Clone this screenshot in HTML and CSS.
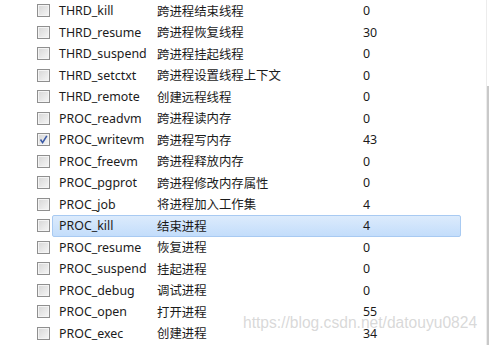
FILE: index.html
```html
<!DOCTYPE html>
<html lang="zh-CN">
<head>
    <meta charset="UTF-8">
    <meta name="viewport" content="width=device-width, initial-scale=1.0">
    <title>API 监控</title>
    <link rel="stylesheet" href="styles.css">
</head>
<body>
    <div class="panel">
        <!-- 监控项列表 -->
        <ul class="apiList">
            <li class="row"><span class="check"></span><div class="item"><span class="name">THRD_kill</span><span class="desc">跨进程结束线程</span><span class="count">0</span></div></li>
            <li class="row"><span class="check"></span><div class="item"><span class="name">THRD_resume</span><span class="desc">跨进程恢复线程</span><span class="count">30</span></div></li>
            <li class="row"><span class="check"></span><div class="item"><span class="name">THRD_suspend</span><span class="desc">跨进程挂起线程</span><span class="count">0</span></div></li>
            <li class="row"><span class="check"></span><div class="item"><span class="name">THRD_setctxt</span><span class="desc">跨进程设置线程上下文</span><span class="count">0</span></div></li>
            <li class="row"><span class="check"></span><div class="item"><span class="name">THRD_remote</span><span class="desc">创建远程线程</span><span class="count">0</span></div></li>
            <li class="row"><span class="check"></span><div class="item"><span class="name">PROC_readvm</span><span class="desc">跨进程读内存</span><span class="count">0</span></div></li>
            <li class="row"><span class="check checked"><svg width="11" height="11" viewBox="0 0 11 11"><path d="M2.5 5.5 L4.6 8.6 L8.8 1.8" fill="none" stroke="#3b5aa6" stroke-width="1.6"/></svg></span><div class="item"><span class="name">PROC_writevm</span><span class="desc">跨进程写内存</span><span class="count">43</span></div></li>
            <li class="row"><span class="check"></span><div class="item"><span class="name">PROC_freevm</span><span class="desc">跨进程释放内存</span><span class="count">0</span></div></li>
            <li class="row"><span class="check"></span><div class="item"><span class="name">PROC_pgprot</span><span class="desc">跨进程修改内存属性</span><span class="count">0</span></div></li>
            <li class="row"><span class="check"></span><div class="item"><span class="name">PROC_job</span><span class="desc">将进程加入工作集</span><span class="count">4</span></div></li>
            <li class="row"><span class="check"></span><div class="item selected"><span class="name">PROC_kill</span><span class="desc">结束进程</span><span class="count">4</span></div></li>
            <li class="row"><span class="check"></span><div class="item"><span class="name">PROC_resume</span><span class="desc">恢复进程</span><span class="count">0</span></div></li>
            <li class="row"><span class="check"></span><div class="item"><span class="name">PROC_suspend</span><span class="desc">挂起进程</span><span class="count">0</span></div></li>
            <li class="row"><span class="check"></span><div class="item"><span class="name">PROC_debug</span><span class="desc">调试进程</span><span class="count">0</span></div></li>
            <li class="row"><span class="check"></span><div class="item"><span class="name">PROC_open</span><span class="desc">打开进程</span><span class="count">55</span></div></li>
            <li class="row"><span class="check"></span><div class="item"><span class="name">PROC_exec</span><span class="desc">创建进程</span><span class="count">34</span></div></li>
        </ul>

        <!-- 滚动条 -->
        <div class="scrollTrack">
            <div class="scrollThumb"></div>
        </div>
    </div>

    <div class="watermark">https://blog.csdn.net/datouyu0824</div>
</body>
</html>
```

FILE: styles.css
```css
body {
    margin: 0;
    width: 490px;
    height: 345px;
    overflow: hidden;
    background: #ffffff;
    font-family: "Noto Sans", "Noto Sans CJK SC", sans-serif;
    font-size: 12.4px;
    color: #1b1b1b;
    position: relative;
}

.panel {
    display: flex;
    height: 345px;
}

.apiList {
    list-style: none;
    margin: 0;
    padding: 0;
    width: 487px;
}

.row {
    display: flex;
    align-items: center;
    height: 21.5px;
}

.check {
    box-sizing: border-box;
    width: 13px;
    height: 13px;
    margin-left: 37px;
    margin-right: 2px;
    border: 1px solid #8f8f8f;
    background: linear-gradient(135deg, #d6d6d6 0%, #f6f6f6 100%);
    box-shadow: inset 0 0 0 1px #f4f4f4;
    display: flex;
    align-items: center;
    justify-content: center;
}

.check svg {
    display: block;
}

.item {
    box-sizing: border-box;
    display: flex;
    align-items: center;
    width: 409px;
    height: 21.5px;
    padding-left: 6px;
    border: 1px solid transparent;
    border-radius: 2px;
}

.item.selected {
    background: linear-gradient(#dcebfc, #c3ddfb);
    border-color: #a8caf2;
}

.name {
    width: 98px;
    white-space: nowrap;
}

.desc {
    width: 206px;
    white-space: nowrap;
}

.count {
    white-space: nowrap;
}

.scrollTrack {
    width: 3px;
    border-left: 1px solid #ececec;
}

.scrollThumb {
    margin-top: 86px;
    height: 259px;
    width: 2px;
    background: #c9c9c9;
}

.watermark {
    position: absolute;
    left: 243px;
    top: 314px;
    font-family: "Liberation Sans", Arial, sans-serif;
    font-size: 15.6px;
    color: rgba(200, 200, 200, 0.7);
    white-space: nowrap;
}
```
